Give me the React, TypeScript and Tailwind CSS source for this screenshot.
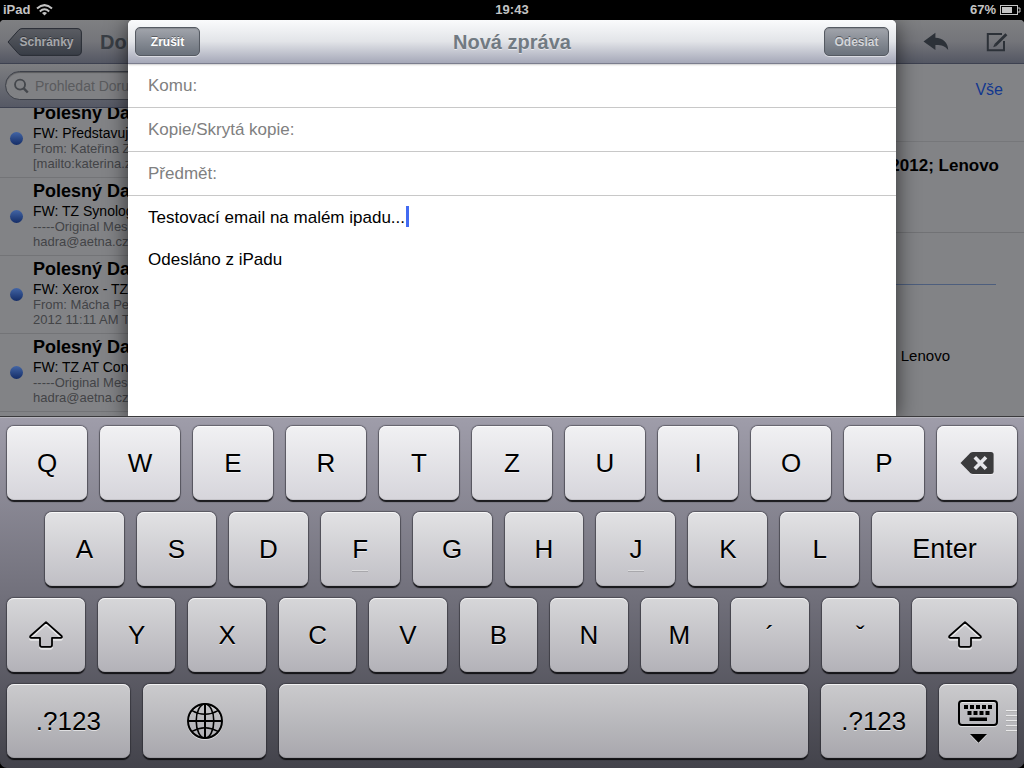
import type { ReactNode } from "react";

const messages = [
  { sender: "Polesný Da", subject: "FW: Představuj", preview: ["From: Kateřina Z", "[mailto:katerina.z"] },
  { sender: "Polesný Da", subject: "FW: TZ Synolog", preview: ["-----Original Mes", "hadra@aetna.cz"] },
  { sender: "Polesný Da", subject: "FW: Xerox - TZ", preview: ["From: Mácha Pe", "2012 11:11 AM T"] },
  { sender: "Polesný Da", subject: "FW: TZ AT Con", preview: ["-----Original Mes", "hadra@aetna.cz"] },
];

const rowTone = {
  first: "from-[#f1f1f3] to-[#d6d5db]",
  second: "from-[#e2e2e4] to-[#c0bfc5]",
  third: "from-[#d7d7d9] to-[#b3b2b8]",
  fourth: "from-[#cbcbcd] to-[#a8a7ad]",
};

type KeyProps = {
  tone: keyof typeof rowTone;
  grow?: string;
  label?: string;
  textSize?: string;
  children?: ReactNode;
};

function Key({ tone, grow = "grow", label, textSize = "text-[26px]", children }: KeyProps) {
  return (
    <button
      type="button"
      aria-label={label}
      className={`relative flex h-[74px] min-w-0 basis-0 items-center justify-center rounded-[7px] bg-linear-to-b leading-8 text-black shadow-[inset_0_1px_0_rgba(255,255,255,0.75),inset_0_-1px_0_rgba(0,0,0,0.08),0_0_1px_1px_rgba(40,40,48,0.5),0_2px_1px_rgba(0,0,0,0.85)] [text-shadow:0_1px_0_rgba(255,255,255,0.6)] ${rowTone[tone]} ${grow} ${textSize}`}
    >
      {children}
    </button>
  );
}

function HomeBar() {
  return <span className="absolute bottom-3.5 h-0.5 w-4 border-t border-white/60 bg-black/15" />;
}

function ShiftIcon() {
  return (
    <svg width="36" height="30" viewBox="0 0 36 30" fill="none" strokeWidth="1.8" strokeLinejoin="round">
      <path d="M18 3.2 L2.4 17 Q1.4 18.7 3.4 18.9 H12 V26 Q12 27.8 13.8 27.8 H22.2 Q24 27.8 24 26 V18.9 H32.6 Q34.6 18.7 33.6 17 Z" stroke="#fff" strokeOpacity="0.6" transform="translate(0 1)" />
      <path d="M18 2.2 L2.4 16 Q1.4 17.7 3.4 17.9 H12 V25 Q12 26.8 13.8 26.8 H22.2 Q24 26.8 24 25 V17.9 H32.6 Q34.6 17.7 33.6 16 Z" stroke="#000" />
    </svg>
  );
}

function GlobeIcon() {
  return (
    <svg width="38" height="38" viewBox="0 0 38 38" fill="none" stroke="#000" strokeWidth="2">
      <circle cx="19" cy="20" r="17" stroke="#fff" strokeOpacity="0.55" />
      <circle cx="19" cy="19" r="17" />
      <ellipse cx="19" cy="19" rx="8.8" ry="17" strokeWidth="1.6" />
      <path d="M19 2V36M2 19H36" />
      <path d="M6 8.6Q19 16 32 8.6M6 29.4Q19 22 32 29.4" strokeWidth="1.5" />
    </svg>
  );
}

function DeleteIcon() {
  return (
    <svg width="34" height="24" viewBox="0 0 34 24">
      <path d="M1 12.8 11 2.6Q12 1.8 13.5 1.8H31Q33.6 1.8 33.6 4.2V21.4Q33.6 23.8 31 23.8H13.5Q12 23.8 11 23Z" fill="#fff" fillOpacity="0.7" />
      <path d="M.5 12 10.5 1.8Q11.5 1 13 1H31Q33.6 1 33.6 3.5V20.5Q33.6 23 31 23H13Q11.5 23 10.5 22.2Z" fill="#3b3b3d" />
      <path d="M14.8 6.2 26 17.8M26 6.2 14.8 17.8" stroke="#e6e6ea" strokeWidth="3.6" />
    </svg>
  );
}

function HideKeyboardIcon() {
  const top = [7, 13, 19, 25, 31];
  const middle = [10.5, 16.5, 22.5, 28.5];
  return (
    <svg width="42" height="44" viewBox="0 0 42 44">
      <rect x="2" y="3" width="38" height="24" rx="3" fill="none" stroke="#fff" strokeOpacity="0.6" strokeWidth="2" />
      <rect x="2" y="2" width="38" height="24" rx="3" fill="none" stroke="#000" strokeWidth="2" />
      {top.map((x) => (
        <rect key={x} x={x} y="6" width="4" height="4" />
      ))}
      {middle.map((x) => (
        <rect key={x} x={x} y="12" width="4" height="4" />
      ))}
      <rect x="12.5" y="18.5" width="17.5" height="3.5" />
      <path d="M13 36H30L21.5 45Z" fill="#fff" fillOpacity="0.5" />
      <path d="M13 35H30L21.5 43.8Z" />
    </svg>
  );
}

function Grip() {
  return (
    <span className="absolute right-0 flex flex-col gap-[3px]">
      {[0, 1, 2, 3, 4].map((n) => (
        <span key={n} className="h-0.5 w-[11px] border-b border-black/25 bg-white/70" />
      ))}
    </span>
  );
}

function StatusBar() {
  return (
    <div className="grid h-5 grid-cols-3 items-center px-[3px] text-[13px] leading-5 font-bold text-[#c4c4c4]">
      <div className="flex items-center gap-1.5">
        <span>iPad</span>
        <svg width="17" height="12" viewBox="0 0 17 12" fill="none" stroke="#c4c4c4" strokeWidth="2">
          <path d="M1 4.4Q8.5-2.2 16 4.4M3.8 7.4Q8.5 3.2 13.2 7.4" />
          <path d="M8.5 11.6 6 8.9Q8.5 6.9 11 8.9Z" fill="#c4c4c4" stroke="none" />
        </svg>
      </div>
      <div className="text-center">19:43</div>
      <div className="flex items-center justify-end gap-1">
        <span>67%</span>
        <svg width="21" height="10" viewBox="0 0 21 10">
          <rect x=".5" y=".5" width="17" height="9" fill="none" stroke="#c4c4c4" />
          <rect x="2" y="2" width="10" height="6" fill="#c4c4c4" />
          <path d="M18 3H20V7H18" fill="none" stroke="#c4c4c4" />
        </svg>
      </div>
    </div>
  );
}

function Sidebar() {
  return (
    <aside className="flex w-80 shrink-0 flex-col overflow-hidden">
      <header className="flex h-11 shrink-0 items-center gap-[18px] rounded-tl border-b border-[#3d4150] bg-linear-to-b from-[#7f8082] via-[#74757a] to-[#545763] pl-[7px]">
        <button type="button" className="relative h-7 w-[75px] pl-1 text-xs font-bold text-[#a6a7ab] [text-shadow:0_-1px_0_rgba(0,0,0,0.35)]">
          <svg className="absolute inset-0" width="75" height="28" viewBox="0 0 75 28">
            <defs>
              <linearGradient id="back" x1="0" y1="0" x2="0" y2="1">
                <stop offset="0" stopColor="#5b5d63" />
                <stop offset="1" stopColor="#383d46" />
              </linearGradient>
            </defs>
            <path d="M1 14 11.5 2.2Q13 .6 15 .6H70Q74.4 .6 74.4 5V23Q74.4 27.4 70 27.4H15Q13 27.4 11.5 25.8Z" fill="url(#back)" stroke="#282c34" />
          </svg>
          <span className="relative">Schránky</span>
        </button>
        <h2 className="text-xl font-bold text-[#393e45]">Dor</h2>
      </header>
      <div className="flex h-11 shrink-0 items-center border-b border-[#3d4150] bg-linear-to-b from-[#7d7e81] to-[#565965] px-[5px]">
        <label className="flex h-[29px] grow items-center gap-1.5 rounded-full border border-[#3d4049] bg-[#808184] pl-2 shadow-[inset_0_1px_1px_rgba(0,0,0,0.3)]">
          <svg width="16" height="16" viewBox="0 0 16 16" fill="none" stroke="#44474c" strokeWidth="2">
            <circle cx="6.5" cy="6.5" r="5.4" />
            <path d="M10.2 10.2 14.8 15" strokeWidth="2.6" />
          </svg>
          <input type="search" aria-label="Prohledat" placeholder="Prohledat Doru" className="w-full bg-transparent text-sm outline-none placeholder:text-[#5a5b5e]" />
        </label>
      </div>
      <div className="min-h-0 grow basis-0 overflow-hidden">
        <ul className="-mt-2">
          {messages.map((m, i) => (
            <li key={i} className="flex h-[78px] border-b border-[#737477] pt-0.5 pl-2.5">
              <span className="mt-[30px] mr-2.5 size-[13px] shrink-0 rounded-full bg-linear-to-b from-[#4365a5] to-[#152d67]" />
              <div>
                <h3 className="text-lg leading-[23px] font-bold text-black">{m.sender}</h3>
                <p className="text-sm leading-4 text-black">{m.subject}</p>
                {m.preview.map((line) => (
                  <p key={line} className="text-[13px] leading-[15px] text-[#434447]">{line}</p>
                ))}
              </div>
            </li>
          ))}
        </ul>
      </div>
    </aside>
  );
}

function MessagePane() {
  return (
    <main className="flex grow flex-col">
      <header className="flex h-11 items-center justify-end gap-[37px] rounded-tr border-b border-[#3d4150] bg-linear-to-b from-[#7f8082] via-[#74757a] to-[#545763] pr-4">
        <button type="button" aria-label="Odpovědět">
          <svg width="26" height="20" viewBox="0 0 26 20">
            <path d="M.5 9.5 12.4 .8V5.8C20 6 25 10.6 25.2 18C22 14.2 18.4 13 12.4 13.1V18Z" fill="#2c3138" />
          </svg>
        </button>
        <button type="button" aria-label="Napsat">
          <svg width="22" height="20" viewBox="0 0 22 20" fill="none" stroke="#2c3138" strokeWidth="2">
            <path d="M16 2H1.8V18.2H18V9" />
            <path d="M9.5 13 20.4 2.2" strokeWidth="2.8" />
            <path d="M7.2 15.3 8.5 12 10.6 14Z" fill="#2c3138" stroke="none" />
          </svg>
        </button>
      </header>
      <section className="flex flex-col text-right text-black">
        <div className="flex h-[78px] items-start justify-end border-b border-[#76777a] pt-3.5 pr-[21px]">
          <a href="#all" className="text-base text-[#12378f]">Vše</a>
        </div>
        <h1 className="h-[91px] border-b border-[#717275] pt-3 pr-[25px] text-[17px] leading-6 font-bold">2012; Lenovo</h1>
        <div className="mr-7 h-[52px] border-b border-[#4d5e7d]" />
        <p className="pt-[59px] pr-[74px] text-[15px] leading-6">Lenovo</p>
      </section>
    </main>
  );
}

const headerButton =
  "h-[29px] w-[65px] rounded-[5px] border border-[#555a62] bg-linear-to-b from-[#a2a5ac] to-[#6b727c] text-xs font-bold shadow-[inset_0_1px_1px_rgba(0,0,0,0.15),0_1px_0_rgba(255,255,255,0.5)] [text-shadow:0_-1px_0_rgba(0,0,0,0.4)]";

function ComposeSheet() {
  const fields = [
    { id: "to", label: "Komu:" },
    { id: "cc", label: "Kopie/Skrytá kopie:" },
    { id: "subject", label: "Předmět:" },
  ];
  return (
    <form className="absolute inset-x-[12.5%] inset-y-0 flex flex-col rounded-t-[5px] bg-white shadow-[0_4px_22px_rgba(0,0,0,0.65)]">
      <header className="flex h-11 shrink-0 items-center justify-between rounded-t-[5px] border-b border-[#7b7e8e] bg-linear-to-b from-[#fafbfc] via-[#e2e4e8] to-[#a5a8b8] px-[7px] shadow-[0_1px_2px_rgba(0,0,0,0.2)]">
        <button type="button" className={`${headerButton} text-white`}>Zrušit</button>
        <h1 className="text-xl font-bold text-[#717a82] [text-shadow:0_1px_0_rgba(255,255,255,0.5)]">Nová zpráva</h1>
        <button type="button" className={`${headerButton} text-[#d3d5d9]`}>Odeslat</button>
      </header>
      {fields.map((f) => (
        <div key={f.id} className="flex h-11 shrink-0 items-center gap-2 border-b border-[#c8c8c8] px-5 text-[17px]">
          <label htmlFor={f.id} className="text-[#808080]">{f.label}</label>
          <input id={f.id} className="min-w-0 grow bg-transparent outline-none" />
        </div>
      ))}
      <div className="relative flex grow">
        <textarea
          aria-label="Text zprávy"
          defaultValue={"Testovací email na malém ipadu...\n\nOdesláno z iPadu"}
          className="grow resize-none overflow-hidden bg-transparent px-5 pt-[11px] text-[17px] leading-[21px] text-black outline-none"
        />
        <span className="absolute top-2.5 left-[278px] h-[21px] w-[3px] bg-[#426bf2]" />
      </div>
    </form>
  );
}

function Keyboard() {
  return (
    <div className="flex shrink-0 flex-col gap-3 rounded-b-[7px] border-t border-[#3a3a3c] bg-linear-to-b from-[#9f9daa] via-[#72717c] to-[#43434b] px-[7px] pt-[9px] pb-2.5 shadow-[inset_0_1px_0_#b5b4bc]">
      <div className="flex gap-[13px]">
        {"QWERTZUIOP".split("").map((k) => (
          <Key key={k} tone="first">{k}</Key>
        ))}
        <Key tone="first" label="Smazat"><DeleteIcon /></Key>
      </div>
      <div className="flex gap-[13px] pl-[38px]">
        {"ASDFGHJKL".split("").map((k) => (
          <Key key={k} tone="second" grow="grow-[79]">
            {k}
            {(k === "F" || k === "J") && <HomeBar />}
          </Key>
        ))}
        <Key tone="second" grow="grow-[145]" textSize="text-[27px]">Enter</Key>
      </div>
      <div className="flex gap-[13px]">
        <Key tone="third" grow="grow-[156]" label="Shift vlevo"><ShiftIcon /></Key>
        {["Y", "X", "C", "V", "B", "N", "M", "´", "ˇ"].map((k) => (
          <Key key={k} tone="third" grow="grow-[155]">{k}</Key>
        ))}
        <Key tone="third" grow="grow-[210]" label="Shift vpravo"><ShiftIcon /></Key>
      </div>
      <div className="flex gap-[13px]">
        <Key tone="fourth" grow="grow-[123]">.?123</Key>
        <Key tone="fourth" grow="grow-[124]" label="Jazyk"><GlobeIcon /></Key>
        <Key tone="fourth" grow="grow-[530]" label="Mezerník" />
        <Key tone="fourth" grow="grow-[105]">.?123</Key>
        <Key tone="fourth" grow="grow-[78]" label="Skrýt klávesnici">
          <HideKeyboardIcon />
          <Grip />
        </Key>
      </div>
    </div>
  );
}

export default function App() {
  return (
    <div className="flex min-h-screen flex-col bg-black font-['Liberation_Sans',Arial,sans-serif]">
      <StatusBar />
      <div className="relative flex grow overflow-hidden rounded-t bg-[#828386]">
        <Sidebar />
        <MessagePane />
        <ComposeSheet />
      </div>
      <Keyboard />
    </div>
  );
}
